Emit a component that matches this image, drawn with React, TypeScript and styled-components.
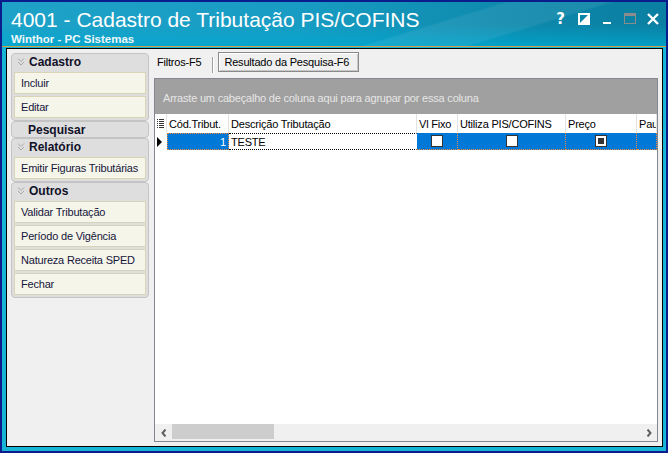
import React from 'react'
import styled, { createGlobalStyle } from 'styled-components'

const GlobalStyle = createGlobalStyle`
	html, body {
		margin: 0;
		padding: 0;
	}
	body {
		font-family: "Liberation Sans", Arial, sans-serif;
		background: #ffffff;
	}
`

const Frame = styled.div`
	width: 668px;
	height: 453px;
	box-sizing: border-box;
	border: 2px solid #0b1c8c;
	background: #17b4d6;
	display: flex;
	flex-direction: column;
	overflow: hidden;
`

const TitleBar = styled.div`
	height: 44px;
	flex-shrink: 0;
	display: flex;
	padding-left: 9px;
	padding-right: 2px;
	color: #ffffff;
	background:
		linear-gradient(163deg, transparent 62%, rgba(255, 255, 255, 0.07) 63%, rgba(255, 255, 255, 0.07) 75%, transparent 76%),
		linear-gradient(180deg, transparent 50%, rgba(0, 168, 208, 0.75) 100%),
		linear-gradient(90deg, #1fa2c8 0%, #189cc3 45%, #0d88ab 78%, #0a7fa1 100%);
`

const TitleText = styled.div`
	flex: 1;
	display: flex;
	flex-direction: column;
	padding-top: 6px;
`

const Heading = styled.div`
	font-size: 21px;
	line-height: 24px;
	white-space: nowrap;
`

const SubHeading = styled.div`
	font-size: 11.5px;
	line-height: 13px;
	font-weight: bold;
	margin-top: 1px;
	color: #eef8fb;
	white-space: nowrap;
`

const Controls = styled.div`
	display: flex;
	align-self: flex-start;
	margin-top: 10px;
`

const ControlButton = styled.div`
	width: 23px;
	height: 13px;
	display: flex;
	align-items: center;
	justify-content: center;
	color: #ffffff;
	font-size: 15px;
	font-weight: bold;
	font-family: "DejaVu Sans", sans-serif;
`

const GoldLine = styled.div`
	height: 1px;
	flex-shrink: 0;
	background: #c9a24a;
	margin-bottom: 1px;
`

const Body = styled.div`
	flex: 1;
	display: flex;
	padding: 0 3px 4px 4px;
	min-height: 0;
`

const Client = styled.div`
	flex: 1;
	display: flex;
	gap: 5px;
	padding: 0 4px 4px 4px;
	border: 1px solid #000000;
	background: #f0f0f0;
	min-width: 0;
`

const SidePanel = styled.div`
	width: 138px;
	flex-shrink: 0;
	display: flex;
	flex-direction: column;
	padding-top: 4px;
`

const Group = styled.div<{ $bare?: boolean }>`
	border: 1px solid #c4c4c4;
	border-radius: 4px;
	background: #dedede;
	padding: ${p => (p.$bare ? '0 2px' : '0 2px 2px')};
	display: flex;
	flex-direction: column;
	gap: 2px;
`

const GroupHeader = styled.div<{ $compact?: boolean }>`
	height: ${p => (p.$compact ? 15 : 16)}px;
	box-sizing: border-box;
	display: flex;
	align-items: center;
	gap: 4px;
	padding-left: ${p => (p.$compact ? 14 : 3)}px;
	padding-bottom: ${p => (p.$compact ? 0 : 1)}px;
	font-size: 12px;
	font-weight: bold;
	color: #101028;
`

const Item = styled.div`
	height: 20px;
	display: flex;
	align-items: center;
	padding-left: 6px;
	border: 1px solid #d8d5b6;
	background: #f6f5ea;
	font-size: 11px;
	letter-spacing: -0.2px;
	color: #15153a;
	white-space: nowrap;
`

const MainPanel = styled.div`
	flex: 1;
	display: flex;
	flex-direction: column;
	min-width: 0;
`

const TabStrip = styled.div`
	height: 29px;
	flex-shrink: 0;
	display: flex;
	align-items: flex-start;
	padding-top: 3px;
	box-sizing: border-box;
`

const Tab = styled.div<{ $active?: boolean }>`
	height: 20px;
	box-sizing: border-box;
	display: flex;
	align-items: center;
	font-size: 11px;
	letter-spacing: -0.2px;
	color: #000000;
	white-space: nowrap;
	min-width: ${p => (p.$active ? '141px' : '0')};
	padding: ${p => (p.$active ? '0 7px 0 5px' : '0 7px 0 3px')};
	border: ${p => (p.$active ? '1px solid #8a8a8a' : 'none')};
	box-shadow: ${p => (p.$active ? 'inset 1px 1px 0 #ffffff, inset -1px -1px 0 #c8c8c8' : 'none')};
`

const TabDivider = styled.div`
	width: 1px;
	height: 16px;
	margin: 5px 5px 0 4px;
	background: #a0a0a0;
	box-shadow: 1px 0 0 #ffffff;
`

const Grid = styled.div`
	flex: 1;
	display: flex;
	flex-direction: column;
	border: 1px solid #828790;
	background: #ffffff;
	min-height: 0;
	overflow: hidden;
`

const GroupByPanel = styled.div`
	height: 35px;
	flex-shrink: 0;
	display: flex;
	align-items: center;
	padding: 3px 0 0 8px;
	box-sizing: border-box;
	background: #a0a0a0;
	color: #e6e6e6;
	font-size: 11px;
	letter-spacing: -0.2px;
	white-space: nowrap;
`

const columns = '12px 62px 188px 41px 108px 71px 1fr'

const HeaderRow = styled.div`
	height: 19px;
	flex-shrink: 0;
	display: grid;
	grid-template-columns: ${columns};
`

const HeaderCell = styled.div`
	display: flex;
	align-items: center;
	padding-left: 2px;
	border-right: 1px solid #e2e2e2;
	font-size: 11px;
	letter-spacing: -0.2px;
	color: #000000;
	white-space: nowrap;
	overflow: hidden;
`

const DataRow = styled.div`
	height: 17px;
	flex-shrink: 0;
	display: grid;
	grid-template-columns: ${columns};
`

const IndicatorCell = styled.div`
	display: flex;
	align-items: center;
	padding-left: 2px;
	background: #ffffff;
`

const Cell = styled.div<{ $kind?: 'focus' | 'edit' | 'plain' }>`
	display: flex;
	align-items: center;
	justify-content: center;
	box-sizing: border-box;
	font-size: 11px;
	letter-spacing: -0.2px;
	white-space: nowrap;
	overflow: hidden;
	background: ${p => (p.$kind === 'edit' ? '#ffffff' : '#0078d7')};
	color: ${p => (p.$kind === 'edit' ? '#000000' : '#ffffff')};
	border-bottom: 1px dotted ${p => (p.$kind === 'edit' ? '#000000' : '#f08a3a')};
	border-right: 1px dotted ${p => (p.$kind === 'edit' ? 'transparent' : '#f08a3a')};
	border-top: ${p => (p.$kind === 'focus' ? '1px dotted #f08a3a' : p.$kind === 'edit' ? '1px dotted #000000' : '0')};
	border-left: ${p => (p.$kind === 'focus' ? '1px dotted #f08a3a' : '0')};
`

const NumberText = styled.span`
	margin-left: auto;
	padding-right: 2px;
`

const EditText = styled.span`
	margin-right: auto;
	padding-left: 2px;
`

const CheckBox = styled.div<{ $checked?: boolean }>`
	width: 12px;
	height: 12px;
	box-sizing: border-box;
	border: 1px solid #333333;
	background: #ffffff;
	display: flex;
	align-items: center;
	justify-content: center;

	&::after {
		content: '';
		width: 6px;
		height: 6px;
		background: ${p => (p.$checked ? '#333333' : 'transparent')};
	}
`

const GridSpace = styled.div`
	flex: 1;
`

const ScrollBar = styled.div`
	height: 17px;
	flex-shrink: 0;
	display: flex;
	align-items: stretch;
	background: #f0f0f0;
`

const ScrollArrow = styled.div`
	width: 17px;
	display: flex;
	align-items: center;
	justify-content: center;
`

const ScrollTrack = styled.div`
	flex: 1;
	display: flex;
	align-items: flex-start;
`

const ScrollThumb = styled.div`
	width: 102px;
	height: 15px;
	background: #cdcdcd;
`

const Chevrons = () => (
	<svg width="8" height="8" viewBox="0 0 8 8">
		<polyline points="1,0.5 4,3.5 7,0.5" fill="none" stroke="#a8a8a8" strokeWidth="1" />
		<polyline points="1,4 4,7 7,4" fill="none" stroke="#a8a8a8" strokeWidth="1" />
	</svg>
)

const ColumnChooser = () => (
	<svg width="7" height="9" viewBox="0 0 7 9">
		<g fill="#333333">
			<rect x="0" y="0" width="1" height="1" />
			<rect x="2" y="0" width="5" height="1" />
			<rect x="0" y="2" width="1" height="1" />
			<rect x="2" y="2" width="5" height="1" />
			<rect x="0" y="4" width="1" height="1" />
			<rect x="2" y="4" width="5" height="1" />
			<rect x="0" y="6" width="1" height="1" />
			<rect x="2" y="6" width="5" height="1" />
			<rect x="0" y="8" width="1" height="1" />
			<rect x="2" y="8" width="5" height="1" />
		</g>
	</svg>
)

const RowPointer = () => (
	<svg width="6" height="10" viewBox="0 0 6 10">
		<polygon points="0,0 5,5 0,10" fill="#000000" />
	</svg>
)

const ArrowIcon = ({ dir }: { dir: 'left' | 'right' }) => (
	<svg width="6" height="8" viewBox="0 0 6 8">
		<polyline
			points={dir === 'left' ? '4.5,0.5 1.5,4 4.5,7.5' : '1.5,0.5 4.5,4 1.5,7.5'}
			fill="none"
			stroke="#606060"
			strokeWidth="2"
		/>
	</svg>
)

const RestoreIcon = () => (
	<svg width="12" height="12" viewBox="0 0 12 12">
		<rect x="1" y="1" width="10" height="10" fill="none" stroke="#ffffff" strokeWidth="2" />
		<polygon points="11,1 11,11 1,11" fill="#ffffff" />
	</svg>
)

const MinimizeIcon = () => (
	<svg width="8" height="12" viewBox="0 0 8 12">
		<rect x="0" y="9" width="8" height="2" fill="#ffffff" />
	</svg>
)

const MaximizeIcon = () => (
	<svg width="12" height="11" viewBox="0 0 12 11">
		<rect x="0.5" y="0.5" width="11" height="10" fill="none" stroke="#8c8c8c" strokeWidth="1" />
		<rect x="0" y="0" width="12" height="3" fill="#8c8c8c" />
	</svg>
)

const CloseIcon = () => (
	<svg width="12" height="12" viewBox="0 0 12 12">
		<path d="M1 1 L11 11 M11 1 L1 11" stroke="#ffffff" strokeWidth="2.4" />
	</svg>
)

const App = () => {
	return (
		<>
			<GlobalStyle />
			<Frame>
				<TitleBar>
					<TitleText>
						<Heading>4001 - Cadastro de Tributação PIS/COFINS</Heading>
						<SubHeading>Winthor - PC Sistemas</SubHeading>
					</TitleText>
					<Controls>
						<ControlButton>?</ControlButton>
						<ControlButton><RestoreIcon /></ControlButton>
						<ControlButton><MinimizeIcon /></ControlButton>
						<ControlButton><MaximizeIcon /></ControlButton>
						<ControlButton><CloseIcon /></ControlButton>
					</Controls>
				</TitleBar>
				<GoldLine />
				<Body>
					<Client>
						<SidePanel>
							<Group>
								<GroupHeader><Chevrons />Cadastro</GroupHeader>
								<Item>Incluir</Item>
								<Item>Editar</Item>
							</Group>
							<Group $bare>
								<GroupHeader $compact>Pesquisar</GroupHeader>
							</Group>
							<Group>
								<GroupHeader><Chevrons />Relatório</GroupHeader>
								<Item>Emitir Figuras Tributárias</Item>
							</Group>
							<Group>
								<GroupHeader><Chevrons />Outros</GroupHeader>
								<Item>Validar Tributação</Item>
								<Item>Período de Vigência</Item>
								<Item>Natureza Receita SPED</Item>
								<Item>Fechar</Item>
							</Group>
						</SidePanel>
						<MainPanel>
							<TabStrip>
								<Tab>Filtros-F5</Tab>
								<TabDivider />
								<Tab $active>Resultado da Pesquisa-F6</Tab>
							</TabStrip>
							<Grid>
								<GroupByPanel>Arraste um cabeçalho de coluna aqui para agrupar por essa coluna</GroupByPanel>
								<HeaderRow>
									<HeaderCell><ColumnChooser /></HeaderCell>
									<HeaderCell>Cód.Tribut.</HeaderCell>
									<HeaderCell>Descrição Tributação</HeaderCell>
									<HeaderCell>Vl Fixo</HeaderCell>
									<HeaderCell>Utiliza PIS/COFINS</HeaderCell>
									<HeaderCell>Preço</HeaderCell>
									<HeaderCell>Pauta</HeaderCell>
								</HeaderRow>
								<DataRow>
									<IndicatorCell><RowPointer /></IndicatorCell>
									<Cell $kind="focus"><NumberText>1</NumberText></Cell>
									<Cell $kind="edit"><EditText>TESTE</EditText></Cell>
									<Cell><CheckBox /></Cell>
									<Cell><CheckBox /></Cell>
									<Cell><CheckBox $checked /></Cell>
									<Cell />
								</DataRow>
								<GridSpace />
								<ScrollBar>
									<ScrollArrow><ArrowIcon dir="left" /></ScrollArrow>
									<ScrollTrack><ScrollThumb /></ScrollTrack>
									<ScrollArrow><ArrowIcon dir="right" /></ScrollArrow>
								</ScrollBar>
							</Grid>
						</MainPanel>
					</Client>
				</Body>
			</Frame>
		</>
	)
}

export default App
